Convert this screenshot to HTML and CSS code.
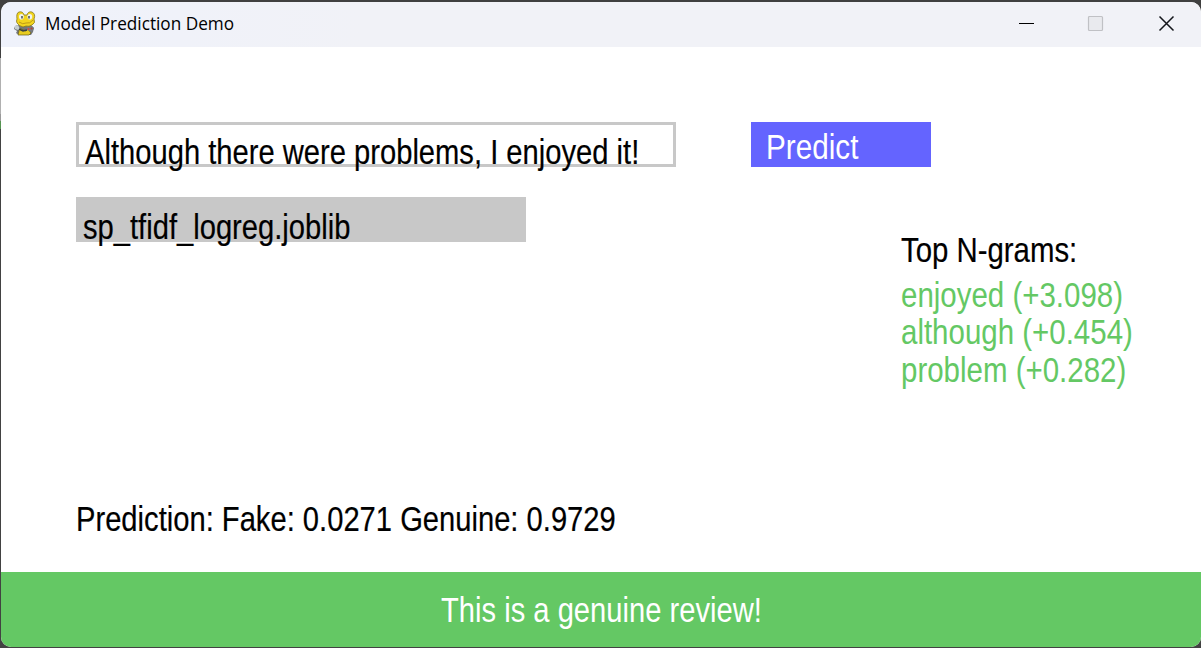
FILE: index.html
```html
<!DOCTYPE html>
<html lang="en">
<head>
<meta charset="utf-8">
<title>Model Prediction Demo</title>
<link rel="stylesheet" href="styles.css">
</head>
<body>
<div class="window">
  <header class="titlebar">
    <svg class="logo" width="22" height="25" viewBox="0 0 22 25">
      <path d="M4 14L1 15L0 18L3 20L2 22L5 24H17L19 21L20 17L17 14Z" fill="#73777a"/>
      <path d="M5 17L12 20L14 18L17 22L15 24H4L5 20Z" fill="#e8cc20" stroke="#655b18" stroke-width=".7"/>
      <path d="M1 15L4 14L6 18L4 19L1 18Z" fill="#c6ced0"/>
      <path d="M13 16L18 15L20 17L18 21L13 19Z" fill="#777b80"/>
      <path d="M3 8Q2 2 5 1Q9 0 10 4H13Q14 0 18 1Q22 3 20 8Q22 12 18 14Q15 16 12 15L9 16Q5 15 3 12Q2 10 3 8Z" fill="#f2d51e" stroke="#88781f" stroke-width=".8"/>
      <ellipse cx="7.4" cy="5.7" rx="2.4" ry="2.8" fill="#f0f2ed"/>
      <ellipse cx="15.8" cy="5.7" rx="2.4" ry="2.8" fill="#f0f2ed"/>
      <path d="M8 5v2.6M15 5v2.6" stroke="#3b4043" stroke-width="1.4"/>
      <path d="M5 11Q9 14 12 12Q16 13 19 9" fill="none" stroke="#bd9a17"/>
      <path d="M5 18l4 2 4-1" fill="none" stroke="#394044" stroke-width="1.4"/>
      <circle cx="14.5" cy="18" r="1.1" fill="#d94b3c"/>
      <circle cx="17.5" cy="17.5" r="1" fill="#b83f36"/>
    </svg>
    <h1 class="title"><span class="title-text">Model Prediction Demo</span></h1>
    <div class="controls">
      <svg width="16" height="16" viewBox="0 0 16 16"><path d="M0 7.5H15" stroke="#000"/></svg>
      <svg width="16" height="16" viewBox="0 0 16 16"><rect x="-.5" y=".5" width="14" height="14" rx="1" fill="#e9eaee" stroke="#c0c1c5" stroke-width="1.2"/></svg>
      <svg width="16" height="16" viewBox="0 0 16 16"><path d="M.5 .5L14.5 14.5M14.5 .5L.5 14.5" stroke="#14161b" stroke-width="1.5"/></svg>
    </div>
  </header>
  <main class="content">
    <div class="query">
      <div class="field"><span class="text">Although there were problems, I enjoyed it!</span></div>
      <div class="predict"><span class="text">Predict</span></div>
    </div>
    <div class="details">
      <div class="model"><span class="text">sp_tfidf_logreg.joblib</span></div>
      <section class="ngrams">
        <div class="heading"><span class="text">Top N-grams:</span></div>
        <div class="ngram"><span class="text">enjoyed (+3.098)</span></div>
        <div class="ngram"><span class="text">although (+0.454)</span></div>
        <div class="ngram"><span class="text">problem (+0.282)</span></div>
      </section>
    </div>
    <div class="scores"><span class="text">Prediction: Fake: 0.0271 Genuine: 0.9729</span></div>
    <footer class="banner"><span class="text">This is a genuine review!</span></footer>
  </main>
</div>
</body>
</html>
```
FILE: styles.css
```css
* { box-sizing: border-box; }
body {
  margin: 0;
  height: 648px;
  padding: 2px 0 1px 1px;
  overflow: hidden;
  background: linear-gradient(#404040 0 58px, #b0b0b0 58px 114px, #999 114px 121px, #559451 121px 129px, #424242 129px);
}
.window {
  width: 1200px;
  height: 645px;
  display: flex;
  flex-direction: column;
  overflow: hidden;
  border-radius: 10px;
  background: #fff;
}
.titlebar {
  height: 45px;
  flex: none;
  display: flex;
  align-items: center;
  padding: 0 26px 0 13px;
  background: linear-gradient(90deg, #eff2fb, #f1f2f7 30%);
}
.logo { margin-top: -3px; }
.title {
  margin: -4px 0 0 9px;
  font: 400 18px/24px "Open Sans", "Noto Sans", sans-serif;
  color: #000;
}
.title-text { display: inline-block; transform-origin: 0 50%; transform: scaleX(.955); }
.controls { display: flex; gap: 54px; margin: -2px 0 0 auto; }
.controls svg { display: block; overflow: visible; }
.content {
  flex: 1;
  display: flex;
  flex-direction: column;
  padding-top: 75px;
}
.text {
  display: inline-block;
  white-space: nowrap;
  transform-origin: 0 50%;
  transform: scaleX(.833);
  font: 35px/37.5px "Liberation Sans", Arial, sans-serif;
  -webkit-text-stroke: .2px currentColor;
}
.query { display: flex; gap: 75px; margin-left: 75px; height: 45px; }
.field { width: 600px; border: 3px solid #c8c8c8; padding: 7.5px 0 0 6px; }
.predict { width: 180px; background: #6464ff; color: #fff; padding: 5.5px 0 0 14.5px; }
.predict .text { transform: scaleX(.848); -webkit-text-stroke-width: 0; }
.details { display: flex; gap: 375px; margin: 30px 0 0 75px; height: 302.5px; }
.model { width: 450px; height: 45px; background: #c8c8c8; padding: 10.5px 0 0 7px; }
.ngrams { padding-top: 33.5px; }
.ngrams div { height: 37.5px; }
.ngrams .heading { height: 45px; }
.heading .text { transform: scaleX(.839); }
.ngram { color: #64c864; }
.ngram .text { transform: scaleX(.842); -webkit-text-stroke-width: 0; }
.scores { margin-left: 75px; height: 72.5px; }
.banner {
  height: 75px;
  padding: 18.5px 0 0 440px;
  background: #64c864;
  color: #fff;
}
.banner .text { -webkit-text-stroke-width: 0; }
```
